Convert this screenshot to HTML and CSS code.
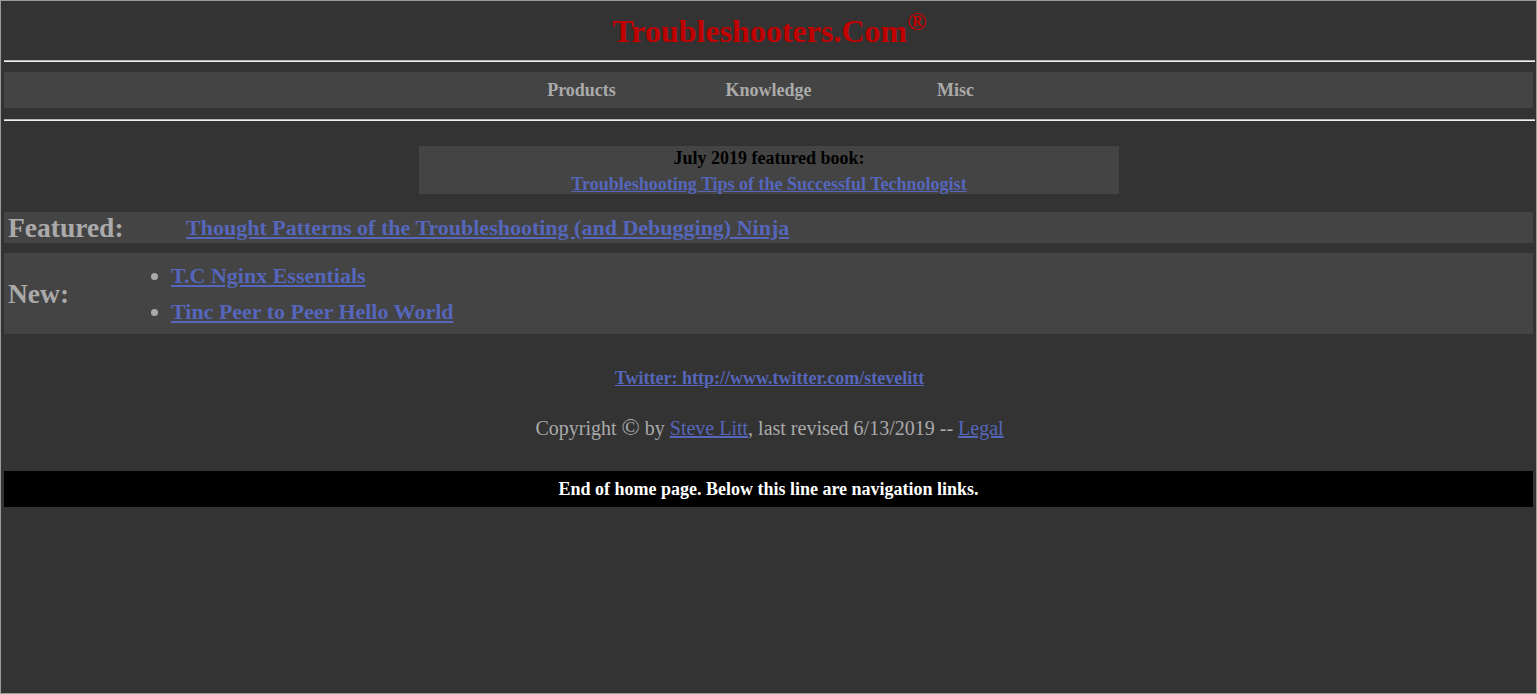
FILE: index.html
```html
<!DOCTYPE html>
<html lang="en">
<head>
<meta charset="utf-8">
<title>Troubleshooters.Com</title>
<link rel="stylesheet" href="styles.css">
</head>
<body>
<header class="masthead">
  <h1 class="site-title">Troubleshooters.Com<sup class="reg">&reg;</sup></h1>
</header>
<hr class="rule">
<nav class="topnav">
  <a class="topnav-item" href="#">Products</a>
  <a class="topnav-item" href="#">Knowledge</a>
  <a class="topnav-item" href="#">Misc</a>
</nav>
<hr class="rule">
<section class="book-box">
  <div class="book-title">July 2019 featured book:</div>
  <div class="book-link-line"><a class="link" href="#">Troubleshooting Tips of the Successful Technologist</a></div>
</section>
<section class="row featured-row">
  <div class="row-label featured-label">Featured:</div>
  <a class="link row-link" href="#">Thought Patterns of the Troubleshooting (and Debugging) Ninja</a>
</section>
<section class="row new-row">
  <div class="row-label new-label">New:</div>
  <ul class="new-list">
    <li><a class="link row-link" href="#">T.C Nginx Essentials</a></li>
    <li><a class="link row-link" href="#">Tinc Peer to Peer Hello World</a></li>
  </ul>
</section>
<p class="twitter"><a class="link" href="#">Twitter: http://www.twitter.com/stevelitt</a></p>
<p class="copyright">Copyright <span class="copy-sign">&copy;</span> by <a class="plain-link" href="#">Steve Litt</a>, last revised 6/13/2019 -- <a class="plain-link" href="#">Legal</a></p>
<div class="endbar">End of home page. Below this line are navigation links.</div>
</body>
</html>
```

FILE: styles.css
```css
html {
  height: 100%;
  box-sizing: border-box;
  border: 1px solid #9a9a9a;
  background: #333333;
  overflow: hidden;
}
body {
  margin: 0 1px 0 3px;
  font-family: "Liberation Serif", "Times New Roman", serif;
  color: #aaaaaa;
  background: #333333;
}
.masthead {
  padding-top: 12px;
}
.site-title {
  margin: 0;
  font-size: 32px;
  line-height: 37px;
  font-weight: bold;
  color: #c00000;
  text-align: center;
}
.reg {
  font-size: 26px;
  line-height: 0;
  vertical-align: 12px;
}
.rule {
  margin: 10px 0 0 0;
  height: 0;
  border: 0;
  border-top: 1px solid #b4b4b4;
  border-bottom: 1px solid #f0f0f0;
}
.topnav {
  margin: 10px 2px 11px 0;
  height: 36px;
  background: #444444;
  display: flex;
  justify-content: center;
}
.topnav + .rule {
  margin-top: 0;
}
.topnav-item {
  width: 187px;
  text-align: center;
  font-size: 18px;
  line-height: 36px;
  font-weight: bold;
  color: #aaaaaa;
  text-decoration: none;
}
.book-box {
  width: 700px;
  height: 48px;
  box-sizing: border-box;
  margin: 25px 0 0 calc(50% - 350.5px);
  padding-top: 1px;
  background: #444444;
  text-align: center;
  font-size: 18px;
  font-weight: bold;
}
.book-title {
  line-height: 22px;
  color: #000000;
}
.book-link-line {
  margin-top: 4px;
  line-height: 22px;
}
.link {
  color: #5566bb;
  font-weight: bold;
  text-decoration: underline;
}
.row {
  margin-right: 2px;
  background: #444444;
  display: flex;
  align-items: center;
}
.featured-row {
  margin-top: 18px;
  height: 31px;
}
.row-label {
  font-size: 27.5px;
  font-weight: bold;
  color: #aaaaaa;
  padding-left: 4px;
  box-sizing: border-box;
  flex: none;
}
.featured-label {
  width: 182px;
  line-height: 31px;
}
.row-link {
  font-size: 22px;
}
.new-row {
  margin-top: 10px;
  padding: 5px 0 4px;
}
.new-label {
  width: 127px;
}
.new-list {
  margin: 0;
  padding-left: 40px;
  list-style: disc;
  color: #aaaaaa;
  font-size: 22px;
}
.new-list li {
  line-height: 36px;
}
.twitter {
  margin: 33px 0 0;
  text-align: center;
  font-size: 18px;
  line-height: 22px;
}
.copyright {
  margin: 26px 0 0;
  text-align: center;
  font-size: 20px;
  line-height: 24px;
  color: #aaaaaa;
}
.copy-sign {
  font-size: 24px;
}
.plain-link {
  color: #5566bb;
  text-decoration: underline;
}
.endbar {
  margin: 31px 2px 0 0;
  height: 36px;
  background: #000000;
  color: #ffffff;
  font-size: 18px;
  font-weight: bold;
  line-height: 36px;
  text-align: center;
}
```
